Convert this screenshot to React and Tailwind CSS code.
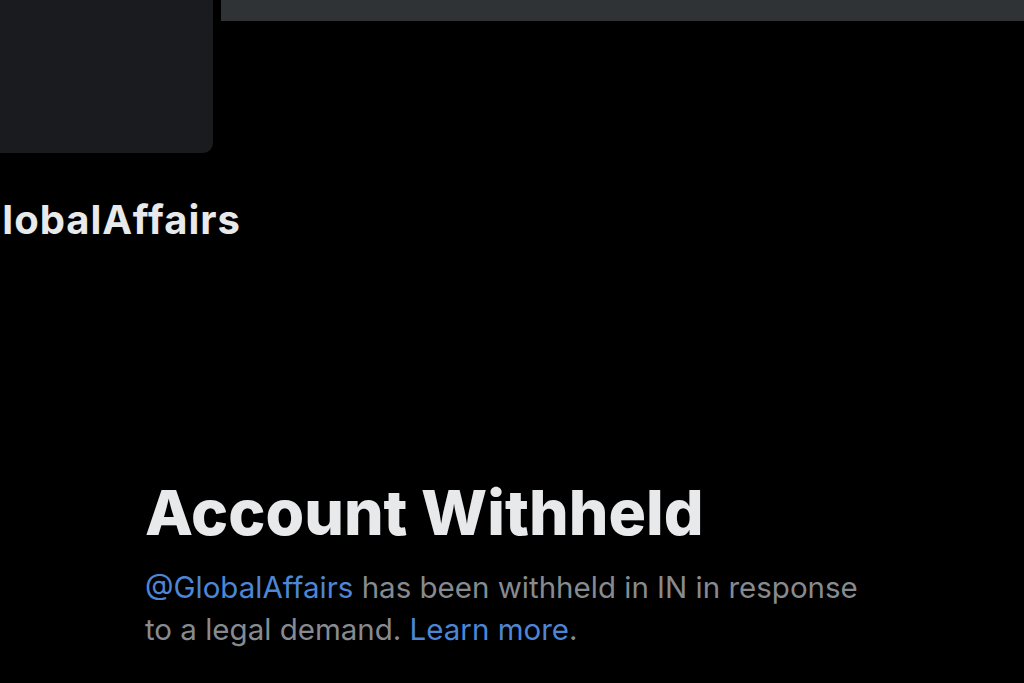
export default function App() {
  return (
    <div className="w-[1024px] h-[683px] bg-black overflow-hidden flex flex-col" style={{ fontFamily: 'Inter, "Liberation Sans", sans-serif' }}>
      <div className="flex items-start">
        <div className="w-[213px] h-[153px] bg-[#1a1b1e] rounded-br-[10px]" />
        <div className="flex-1 ml-[8px] h-[21px] bg-[#2f3336]" />
      </div>
      <div className="mt-[41px] w-[241px] h-[52px] overflow-hidden flex justify-end">
        <div className="shrink-0 whitespace-nowrap text-[40px] font-bold text-[#e7e9ea] leading-[52px] tracking-[1px]">GlobalAffairs</div>
      </div>
      <div className="pl-[145px] mt-[234px]">
        <h1 className="text-[62.5px] font-extrabold text-[#e7e9ea] leading-[64px]">Account Withheld</h1>
        <p className="mt-[22px] w-[735px] text-[29.5px] leading-[42px] text-[#878b90]">
          <span className="text-[#4d86d6]">@GlobalAffairs</span> has been withheld in IN in response to a legal demand. <span className="text-[#4d86d6]">Learn more</span>.
        </p>
      </div>
    </div>
  );
}
